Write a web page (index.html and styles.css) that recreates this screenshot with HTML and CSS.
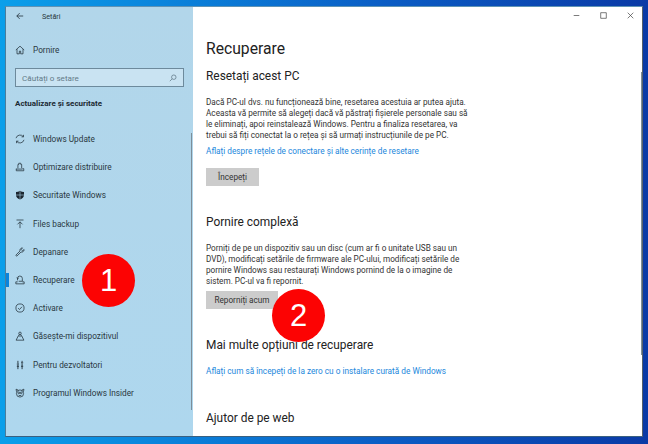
FILE: index.html
```html
<!DOCTYPE html>
<html lang="ro">
<head>
<meta charset="utf-8">
<title>Setări</title>
<link rel="stylesheet" href="styles.css">
</head>
<body>
<div class="window">
  <aside class="sidebar">
    <div class="titlebar">
      <svg class="back" viewBox="0 0 10 10"><path d="M9 5H1M4.600 1.400 1 5l3.600 3.600"/></svg>
      <span class="apptitle">Setări</span>
    </div>
    <div class="home nav-row">
      <svg class="ico" viewBox="0 0 12 12"><path d="M1 6 6 1.400 11 6M2.400 5v5.600h2.800V7.400h1.600v3.200h2.800V5"/></svg>
      <span>Pornire</span>
    </div>
    <div class="search"><span>Căutați o setare</span>
      <svg class="search-ico" viewBox="0 0 10 10"><circle cx="6" cy="4" r="2.800"/><path d="M4 6 1 9"/></svg>
    </div>
    <div class="section">Actualizare și securitate</div>
    <nav class="nav">
      <div class="nav-row"><svg class="ico" viewBox="0 0 12 12"><path d="M1.200 5A5 5 0 0 1 10 3.200M10.800 7A5 5 0 0 1 2 8.800M10.200 1v2.400H7.800M1.800 11V8.600h2.400"/></svg><span>Windows Update</span></div>
      <div class="nav-row"><svg class="ico" viewBox="0 0 12 12"><path d="M1.500 8v2.500h9V8h-1.500M1.500 8.500H9M3.500 7.500V3h1V1.500h2.500V3h1v4.500"/></svg><span>Optimizare distribuire</span></div>
      <div class="nav-row"><svg class="ico" viewBox="0 0 12 12"><path class="solid" d="M6 .8c1.400 1 3 1.500 4.800 1.500v3.700c0 2.800-2 4.400-4.800 5.500C3.200 10.400 1.200 8.800 1.200 6V2.300C3 2.300 4.600 1.800 6 .8Z"/><path class="cut" d="M6 1v10.500M1.200 6h9.600"/></svg><span>Securitate Windows</span></div>
      <div class="nav-row"><svg class="ico" viewBox="0 0 12 12"><path d="M1.800 1.200h8.400M6 11V3.400M3 6.400l3-3 3 3"/></svg><span>Files backup</span></div>
      <div class="nav-row"><svg class="ico" viewBox="0 0 12 12"><path d="M1.300 9.500 6 4.800C5.400 3 6.800 1 9 1.100L7.400 2.800 9.100 4.600 10.900 3C11 5.200 9 6.600 7.200 6L2.500 10.700c-.8.600-1.800-.4-1.200-1.200Z"/></svg><span>Depanare</span></div>
      <div class="nav-row active"><svg class="ico" viewBox="0 0 12 12"><path d="M1 10.600h10V8.200H8.800M1 10.600V8.200h2.200M3 6.400V4.300A2.800 2.800 0 0 1 8.800 4v3.500H4.400M2.200 3l.8 1.500L4.500 3.700"/></svg><span>Recuperare</span></div>
      <div class="nav-row"><svg class="ico" viewBox="0 0 12 12"><circle cx="6" cy="6" r="4.900"/><path d="m3.700 6.200 1.700 1.600 3-3.300"/></svg><span>Activare</span></div>
      <div class="nav-row"><svg class="ico" viewBox="0 0 12 12"><circle cx="6" cy="2.800" r="1.500"/><path d="M5 4.200 3.300 7.300M7 4.200 8.700 7.300M3.500 6.800 1.300 11h9.400L8.500 6.800M6 4.400v3"/></svg><span>Găsește-mi dispozitivul</span></div>
      <div class="nav-row"><svg class="ico" viewBox="0 0 12 12"><path class="thick" d="M3.500 1v3M3.500 5.500V11M8.500 1v1.500M8.500 4v7M2.200 4.800h2.600M7.200 3.300h2.600M2.200 7.500h2.600M7.200 7.500h2.600"/></svg><span>Pentru dezvoltatori</span></div>
      <div class="nav-row"><svg class="ico" viewBox="0 0 12 12"><circle cx="6" cy="6.600" r="4.300"/><circle cx="4.500" cy="5.800" r="1.100"/><circle cx="7.500" cy="5.800" r="1.100"/><path d="M1.800 4.400 1.300 1.400 4 2.600M10.200 4.400l.5-3L8 2.600M4.500 9h3"/></svg><span>Programul Windows Insider</span></div>
    </nav>
    <div class="scroll scroll-side"></div>
  </aside>
  <main class="content">
    <div class="controls">
      <svg viewBox="0 0 10 10"><path d="M1 5h8"/></svg>
      <svg viewBox="0 0 10 10"><path d="M1 1h8v8H1z"/></svg>
      <svg viewBox="0 0 10 10"><path d="m1 1 8 8m0-8-8 8"/></svg>
    </div>
    <h1>Recuperare</h1>
    <h2 class="h-reset">Resetați acest PC</h2>
    <p class="p-reset">Dacă PC-ul dvs. nu funcționează bine, resetarea acestuia ar putea ajuta.<br>Aceasta vă permite să alegeți dacă vă păstrați fișierele personale sau să<br>le eliminați, apoi reinstalează Windows. Pentru a finaliza resetarea, va<br>trebui să fiți conectat la o rețea și să urmați instrucțiunile de pe PC.</p>
    <a class="link link-reset">Aflați despre rețele de conectare și alte cerințe de resetare</a>
    <button class="btn btn-start">Începeți</button>
    <h2 class="h-adv">Pornire complexă</h2>
    <p class="p-adv">Porniți de pe un dispozitiv sau un disc (cum ar fi o unitate USB sau un<br>DVD), modificați setările de firmware ale PC-ului, modificați setările de<br>pornire Windows sau restaurați Windows pornind de la o imagine de<br>sistem. PC-ul va fi repornit.</p>
    <button class="btn btn-restart">Reporniți acum</button>
    <h2 class="h-more">Mai multe opțiuni de recuperare</h2>
    <a class="link link-more">Aflați cum să începeți de la zero cu o instalare curată de Windows</a>
    <h2 class="h-web">Ajutor de pe web</h2>
    <a class="link link-web">Găsirea setărilor de recuperare</a>
    <div class="scroll scroll-main"></div>
  </main>
</div>
<div class="badge badge-one">1</div>
<div class="badge badge-two">2</div>
</body>
</html>
```
FILE: styles.css
```css
* { box-sizing: border-box; }
html, body { height: 100%; }
body {
  margin: 0;
  padding: 6px 5px 7px;
  overflow: hidden;
  font-family: Roboto, "Open Sans", sans-serif;
  background: linear-gradient(90deg, #0a9fea 0%, #0a84dc 25%, #0b5cc4 60%, #0a3aa6 100%);
}
.window {
  position: relative;
  display: flex;
  height: 431px;
  overflow: hidden;
  border: 1px solid #3f6d8c;
  border-top-color: #5f93b5;
  border-left-color: #4a7d9c;
  border-right-color: #55606a;
  border-bottom-color: #3a6080;
  background: #fff;
}
.sidebar {
  position: relative;
  flex: none;
  width: 187px;
  background: linear-gradient(180deg, #b2d6ea 0%, #aed7ee 100%);
  color: #2a3842;
  font-size: 8.250px;
}
.titlebar { display: flex; align-items: center; height: 18px; padding-left: 10px; }
.back { width: 8px; height: 8px; fill: none; stroke: #22303a; stroke-width: 1; }
.apptitle { margin-left: 18px; font-size: 7.200px; }
.nav-row { position: relative; display: flex; align-items: center; height: 28.200px; padding-left: 9px; }
.nav-row span { margin-left: 8px; white-space: nowrap; }
.home { margin-top: 11.500px; height: 26px; }
.ico { flex: none; width: 10px; height: 10px; fill: none; stroke: #22303a; stroke-width: 0.9; }
.ico .solid { fill: #1b2630; stroke: none; }
.ico .cut { stroke: #aed6ec; stroke-width: .7; }
.ico .thick { stroke-width: 1.100; }
.search {
  display: flex; align-items: center; justify-content: space-between;
  margin: 5.500px 0 0 9px; width: 169px; height: 19px;
  padding: 0 6px;
  border: 1px solid #6d8a9c;
  background: #c9e3f2;
  color: #647b89;
  font-size: 8.100px;
}
.search-ico { width: 8px; height: 8px; fill: none; stroke: #5c7483; stroke-width: .9; }
.section { margin: 11px 0 0 9px; font-size: 8px; line-height: 12px; font-weight: 700; color: #1c2a33; }
.nav { margin-top: 15px; }
.active::before { content: ""; position: absolute; left: 0; top: 7px; width: 3px; height: 14px; background: #0a84dc; }
.scroll { position: absolute; background: #7d8e99; width: 1px; }
.scroll-side { right: 1px; top: 126px; height: 277px; }
.content { position: relative; flex: 1; padding-left: 13px; background: #fff; color: #2a2a2a; overflow: hidden; }
.controls { position: absolute; top: 5px; right: 8px; display: flex; gap: 20px; }
.controls svg { width: 7px; height: 7px; fill: none; stroke: #444; stroke-width: 1; }
h1 { margin: 32px 0 0; font-size: 15.700px; line-height: 20px; font-weight: 400; color: #222; }
h2 { margin: 0; font-size: 11.900px; line-height: 15px; font-weight: 400; color: #222; }
.h-reset { margin-top: 10px; }
p { margin: 0; font-size: 8.200px; line-height: 11px; color: #333; white-space: nowrap; }
.p-reset { margin-top: 13px; }
.p-adv { margin-top: 13px; }
.link { display: block; color: #1c87dc; font-size: 8.250px; line-height: 11px; white-space: nowrap; }
.link-reset { margin-top: 5.400px; }
.btn { display: block; height: 18px; border: 0; padding: 0; background: #cccccc; color: #333; font: 8.200px Roboto, "Open Sans", sans-serif; }
.btn-start { width: 53px; margin-top: 11px; }
.btn-restart { width: 72px; margin-top: 3.600px; }
.h-adv { margin-top: 29px; }
.h-more { margin-top: 29px; }
.link-more { margin-top: 13px; }
.h-web { margin-top: 34px; }
.link-web { margin-top: 9.500px; }
.scroll-main { right: 0; top: 65px; height: 283px; }
.badge {
  position: absolute;
  display: flex; align-items: center; justify-content: center;
  width: 53px; height: 53px; border-radius: 50%;
  background: #fc0303; color: #fff;
  font: 400 31px/1 "Liberation Sans", sans-serif;
}
.badge-one { left: 82px; top: 254px; }
.badge-two { left: 272px; top: 288.500px; }
```
